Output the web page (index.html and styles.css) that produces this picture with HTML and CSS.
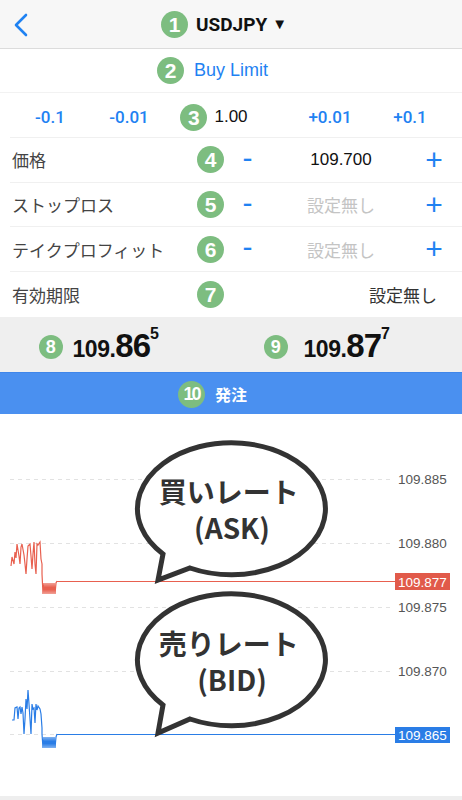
FILE: index.html
```html
<!DOCTYPE html>
<html lang="ja">
  <head>
    <meta charset="UTF-8" />
    <meta name="viewport" content="width=device-width, initial-scale=1.0" />
    <title>Order</title>
    <link rel="stylesheet" href="styles.css">
  </head>
  <body>
    <div class="screen">
      <header class="nav-bar">
        <div class="nav-back">
          <svg width="16" height="24" viewBox="0 0 16 24">
            <path d="M13 2 L3 12 L13 22" fill="none" stroke="#1f82f2" stroke-width="2.6" stroke-linecap="round" stroke-linejoin="round" />
          </svg>
        </div>
        <div class="nav-title">
          <span class="mark mark-title">1</span>
          USDJPY <span class="caret">▼</span>
        </div>
        <div class="nav-side"></div>
      </header>

      <div class="order-type">
        <span class="order-type-text">
          <span class="mark mark-left">2</span>
          Buy Limit
        </span>
      </div>

      <div class="lot-row">
        <span class="lot-step">-0.1</span>
        <span class="lot-step">-0.01</span>
        <span class="lot-value">
          <span class="mark mark-lot">3</span>
          1.00
        </span>
        <span class="lot-step">+0.01</span>
        <span class="lot-step">+0.1</span>
      </div>

      <div class="field-row">
        <span class="field-label">価格</span>
        <span class="mark">4</span>
        <span class="field-minus">-</span>
        <span class="field-value">109.700</span>
        <span class="field-plus">+</span>
      </div>
      <div class="field-row">
        <span class="field-label">ストップロス</span>
        <span class="mark">5</span>
        <span class="field-minus">-</span>
        <span class="field-value empty">設定無し</span>
        <span class="field-plus">+</span>
      </div>
      <div class="field-row">
        <span class="field-label">テイクプロフィット</span>
        <span class="mark">6</span>
        <span class="field-minus">-</span>
        <span class="field-value empty">設定無し</span>
        <span class="field-plus">+</span>
      </div>
      <div class="field-row last">
        <span class="field-label">有効期限</span>
        <span class="mark">7</span>
        <span class="field-expiry">設定無し</span>
      </div>

      <div class="quote-band">
        <div class="quote">
          <span class="quote-text">
            <span class="mark mark-quote">8</span>
            109.<span class="quote-big">86</span><sup class="quote-pip">5</sup>
          </span>
        </div>
        <div class="quote">
          <span class="quote-text">
            <span class="mark mark-quote wide">9</span>
            109.<span class="quote-big">87</span><sup class="quote-pip">7</sup>
          </span>
        </div>
      </div>

      <button class="submit">
        <span class="submit-text">
          <span class="mark mark-submit">10</span>
          発注
        </span>
      </button>

      <div class="chart">
        <svg width="462" height="382" viewBox="0 0 462 382">
          <g stroke="#e2e2e2" stroke-width="1" stroke-dasharray="4 4">
            <line x1="10" y1="65.5" x2="392" y2="65.5" />
            <line x1="10" y1="129.5" x2="392" y2="129.5" />
            <line x1="10" y1="193.5" x2="392" y2="193.5" />
            <line x1="10" y1="257.5" x2="392" y2="257.5" />
            <line x1="10" y1="320.5" x2="392" y2="320.5" />
          </g>
          <g class="axis-label">
            <text x="398" y="70">109.885</text>
            <text x="398" y="134">109.880</text>
            <text x="398" y="198">109.875</text>
            <text x="398" y="262">109.870</text>
          </g>

          <polyline fill="none" stroke="#e8604f" stroke-width="1.2"
            points="11,152 12,143 14,150 15,138 16,144 17,130 19,142 20,150 21,133 22,130 24,141 25,150 26,160 27,145 28,132 30,130 31,142 32,155 33,140 34,128 35,150 36,160 37,130 38,131 40,128 41,145 42,150 42,160 43,180 44,169 45,180 46,169 47,180 48,169 49,180 50,169 51,180 52,169 53,180 54,169 55,180 56,169 57,167" />
          <line x1="57" y1="167.5" x2="396" y2="167.5" stroke="#e8604f" stroke-width="1.2" />
          <rect x="395" y="159" width="55" height="17" fill="#e15a4a" />
          <text class="tag-label" x="398" y="172.5">109.877</text>

          <polyline fill="none" stroke="#2a7de6" stroke-width="1.2"
            points="12,306 14,306 15,294 17,293 18,305 19,294 20,293 21,300 22,293 23,299 24,320 25,305 26,285 27,295 28,276 29,290 30,305 31,320 32,290 33,295 34,294 35,309 36,290 37,296 38,292 40,295 41,300 42,314 42,320 43,334 44,323 45,334 46,323 47,334 48,323 49,334 50,323 51,334 52,323 53,334 54,323 55,334 56,323 57,320" />
          <line x1="57" y1="320.5" x2="396" y2="320.5" stroke="#2a7de6" stroke-width="1.2" />
          <rect x="395" y="313" width="55" height="16" fill="#2a7de6" />
          <text class="tag-label" x="398" y="326">109.865</text>

          <path d="M190 154 A94 66 0 1 0 163 140 L158 166 Z" fill="#fff" stroke="#333" stroke-width="5" stroke-linejoin="miter" />
          <text class="bubble-text">
            <tspan x="232" y="89">買いレート</tspan>
            <tspan x="232" y="125">(ASK)</tspan>
          </text>

          <path d="M190 305 A94 66 0 1 0 163 291 L158 319 Z" fill="#fff" stroke="#333" stroke-width="5" stroke-linejoin="miter" />
          <text class="bubble-text">
            <tspan x="232" y="241">売りレート</tspan>
            <tspan x="232" y="277">(BID)</tspan>
          </text>
        </svg>
      </div>
    </div>
  </body>
</html>
```

FILE: styles.css
```css
html {
  background: #ffffff;
}
body {
  margin: 0;
  font-family: "Liberation Sans", "Noto Sans CJK JP", sans-serif;
  color: #222;
}
.screen {
  width: 462px;
  height: 800px;
  display: flex;
  flex-direction: column;
  overflow: hidden;
}

/* number marks */
.mark {
  display: inline-flex;
  justify-content: center;
  align-items: center;
  width: 27px;
  height: 27px;
  border-radius: 50%;
  background: #7dbd80;
  color: #fff;
  font-family: "Liberation Sans", sans-serif;
  font-weight: bold;
  font-size: 21px;
  line-height: 1;
}
.mark-left,
.mark-lot,
.mark-quote,
.mark-submit {
  position: absolute;
  top: 50%;
  margin-top: -13px;
  right: 100%;
  margin-right: 8px;
}

/* header */
.nav-bar {
  height: 48px;
  background: #f7f7f7;
  border-bottom: 1px solid #dcdcdc;
  display: flex;
  align-items: center;
}
.nav-back,
.nav-side {
  width: 40px;
}
.nav-back {
  display: flex;
  padding-left: 13px;
  box-sizing: border-box;
  padding-top: 2px;
}
.nav-title {
  flex: 1;
  display: flex;
  justify-content: center;
  align-items: center;
  font-family: Roboto, "Liberation Sans", sans-serif;
  font-weight: bold;
  font-size: 19px;
  color: #111;
  padding-top: 1px;
  padding-right: 14px;
}
.mark-title {
  margin-right: 8px;
}
.caret {
  font-size: 15px;
  margin-left: 5px;
}

/* order type */
.order-type {
  height: 43px;
  display: flex;
  justify-content: center;
  align-items: center;
  border-bottom: 1px solid #f2f2f2;
}
.order-type-text {
  position: relative;
  color: #1f82f2;
  font-size: 18px;
  padding-top: 1px;
}
.mark-left {
  margin-right: 10px;
}

/* lot */
.lot-row {
  height: 45px;
  display: grid;
  grid-template-columns: 80px 78px 126px 72px 88px;
  align-items: center;
  margin-left: 10px;
  padding-top: 4px;
  border-bottom: 1px solid #f0f0f0;
  box-sizing: border-box;
}
.lot-step {
  text-align: center;
  color: #1f82f2;
  font-family: Roboto, "Liberation Sans", sans-serif;
  font-weight: 500;
  font-size: 17px;
}
.lot-value {
  position: relative;
  justify-self: center;
  font-size: 17px;
  color: #111;
}
.mark-lot {
  margin-right: 7px;
}

/* fields */
.field-row {
  height: 45px;
  display: grid;
  grid-template-columns: 185px 27px 47px 140px 46px;
  align-items: center;
  margin-left: 10px;
  padding-left: 2px;
  border-bottom: 1px solid #f0f0f0;
  box-sizing: border-box;
}
.field-row.last {
  border-bottom: none;
}
.field-label {
  font-family: "Noto Sans CJK JP", sans-serif;
  font-size: 17px;
  color: #444;
}
.field-minus,
.field-plus {
  text-align: center;
  color: #1f82f2;
  font-size: 30px;
  line-height: 1;
}
.field-minus {
  margin-top: -4px;
}
.field-value {
  text-align: center;
  font-size: 17px;
  color: #111;
}
.field-value.empty {
  font-family: "Noto Sans CJK JP", sans-serif;
  color: #c4c4c4;
}
.field-expiry {
  grid-column: 3 / 6;
  text-align: right;
  padding-right: 20px;
  font-family: "Noto Sans CJK JP", sans-serif;
  font-size: 17px;
  color: #333;
}

/* quotes */
.quote-band {
  height: 55px;
  background: #efefef;
  display: flex;
  align-items: center;
}
.quote {
  flex: 1;
  display: flex;
  justify-content: center;
}
.quote-text {
  position: relative;
  font-weight: bold;
  font-size: 23px;
  color: #111;
  letter-spacing: -0.5px;
  padding-top: 2px;
}
.quote-big {
  font-size: 33px;
  letter-spacing: -1px;
}
.quote-pip {
  font-size: 16px;
  vertical-align: top;
  position: relative;
  top: -2px;
}
.mark-quote {
  width: 24px;
  height: 24px;
  margin-top: -10px;
  font-size: 18px;
  margin-right: 10px;
}
.mark-quote.wide {
  margin-right: 16px;
}

/* submit */
.submit {
  height: 42px;
  border: none;
  border-top: 1px solid #3f86ea;
  background: #4a90f0;
  display: flex;
  justify-content: center;
  align-items: center;
  padding: 0;
  margin: 0;
  width: 100%;
  font: inherit;
}
.submit-text {
  position: relative;
  color: #fff;
  font-family: "Noto Sans CJK JP", sans-serif;
  font-weight: bold;
  font-size: 16px;
}
.mark-submit {
  font-size: 18px;
  letter-spacing: -2px;
  margin-right: 10px;
}

/* chart */
.chart {
  height: 382px;
  border-bottom: 4px solid #eeeeee;
}
.chart svg {
  display: block;
}
.axis-label text {
  font-family: "Liberation Sans", sans-serif;
  font-size: 13.5px;
  fill: #555;
}
.tag-label {
  font-family: "Liberation Sans", sans-serif;
  font-size: 13.5px;
  fill: #fff;
}
.bubble-text {
  font-family: "Noto Sans CJK JP", sans-serif;
  font-weight: bold;
  font-size: 28px;
  fill: #333;
  text-anchor: middle;
}
```
